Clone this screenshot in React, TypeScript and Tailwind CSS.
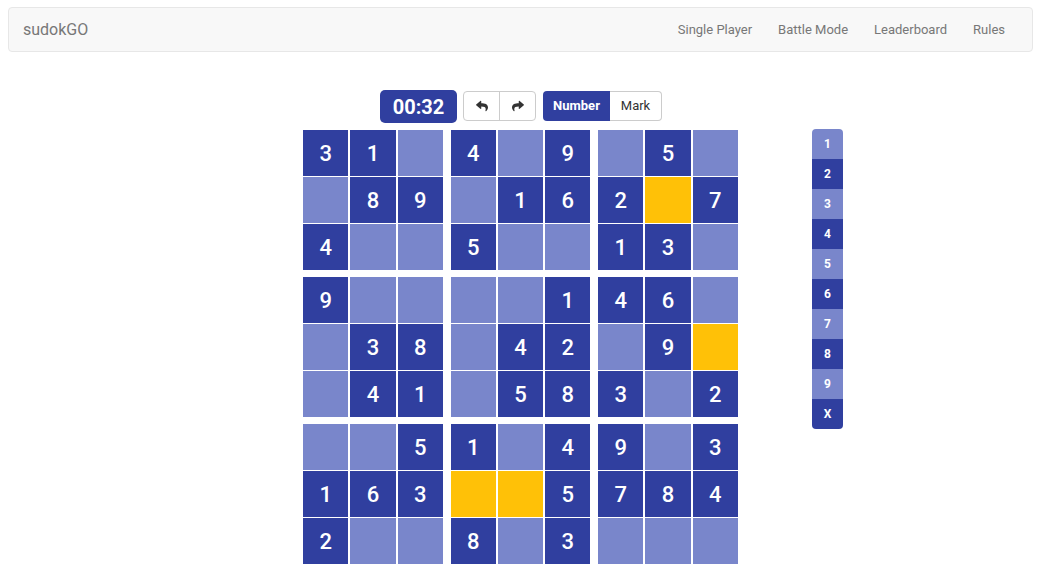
import React from 'react';
import { FaReply, FaShare } from 'react-icons/fa';

// 0 = empty (light), -1 = selected/highlighted (amber), 1..9 = given number
const board: number[][] = [
  [3, 1, 0, 4, 0, 9, 0, 5, 0],
  [0, 8, 9, 0, 1, 6, 2, -1, 7],
  [4, 0, 0, 5, 0, 0, 1, 3, 0],
  [9, 0, 0, 0, 0, 1, 4, 6, 0],
  [0, 3, 8, 0, 4, 2, 0, 9, -1],
  [0, 4, 1, 0, 5, 8, 3, 0, 2],
  [0, 0, 5, 1, 0, 4, 9, 0, 3],
  [1, 6, 3, -1, -1, 5, 7, 8, 4],
  [2, 0, 0, 8, 0, 3, 0, 0, 0],
];

const navLinks = ['Single Player', 'Battle Mode', 'Leaderboard', 'Rules'];
const pads = ['1', '2', '3', '4', '5', '6', '7', '8', '9', 'X'];

const Cell = ({ value }: { value: number }) => {
  const bg =
    value === -1 ? 'bg-[#ffc107]' : value === 0 ? 'bg-[#7986cb]' : 'bg-[#303f9f]';
  return (
    <div className={`flex items-center justify-center text-[22px] font-medium text-white ${bg}`}>
      {value > 0 ? value : ''}
    </div>
  );
};

const Box = ({ br, bc }: { br: number; bc: number }) => {
  const cells: number[] = [];
  for (let r = 0; r < 3; r++) {
    for (let c = 0; c < 3; c++) {
      cells.push(board[br * 3 + r][bc * 3 + c]);
    }
  }
  return (
    <div className="grid h-[140px] w-[140px] grid-cols-3 grid-rows-3 gap-x-[2px] gap-y-[1px]">
      {cells.map((v, i) => (
        <Cell key={i} value={v} />
      ))}
    </div>
  );
};

const App = () => {
  return (
    <div className="min-h-[577px] w-full bg-white font-['Roboto','Liberation_Sans',sans-serif]">
      {/* navbar */}
      <nav className="ml-[8px] mt-[7px] flex h-[45px] w-[1025px] items-center justify-between rounded border border-[#e7e7e7] bg-[#f8f8f8]">
        <span className="pl-[14px] text-[16px] text-[#777]">sudokGO</span>
        <ul className="flex pr-[14px] text-[13px] text-[#777]">
          {navLinks.map((l) => (
            <li key={l} className="px-[13px]">
              {l}
            </li>
          ))}
        </ul>
      </nav>

      <div className="ml-[303px] mt-[38px] flex">
        <div>
          {/* toolbar */}
          <div className="ml-[77px] flex items-start">
            <div className="flex h-[33px] w-[77px] items-center justify-center rounded-[5px] bg-[#303f9f] text-[20px] font-bold text-white">
              00:32
            </div>
            <div className="ml-[6px] mt-[1px] flex h-[30px] rounded border border-[#ccc] bg-white text-[#333]">
              <button className="flex w-[36px] items-center justify-center border-r border-[#ccc]">
                <FaReply className="h-[12px] w-[12px]" />
              </button>
              <button className="flex w-[35px] items-center justify-center">
                <FaShare className="h-[12px] w-[12px]" />
              </button>
            </div>
            <div className="ml-[7px] mt-[1px] flex h-[30px] text-[13px]">
              <button className="w-[67px] rounded-l bg-[#303f9f] font-bold text-white">Number</button>
              <button className="w-[52px] rounded-r border border-l-0 border-[#ccc] bg-white text-[#333]">
                Mark
              </button>
            </div>
          </div>

          {/* board */}
          <div className="mt-[7px] grid w-[435px] grid-cols-3 gap-x-[7.5px] gap-y-[7px]">
            {[0, 1, 2].map((br) =>
              [0, 1, 2].map((bc) => <Box key={`${br}-${bc}`} br={br} bc={bc} />)
            )}
          </div>
        </div>

        {/* number pad */}
        <div className="ml-[74px] mt-[39px] flex w-[31px] flex-col self-start">
          {pads.map((p, i) => (
            <div
              key={p}
              className={`flex h-[30px] items-center justify-center text-[12px] font-bold text-white ${
                p !== 'X' && Number(p) % 2 === 1 ? 'bg-[#7986cb]' : 'bg-[#303f9f]'
              } ${i === 0 ? 'rounded-t' : ''} ${i === pads.length - 1 ? 'rounded-b' : ''}`}
            >
              {p}
            </div>
          ))}
        </div>
      </div>
    </div>
  );
};

export default App;
